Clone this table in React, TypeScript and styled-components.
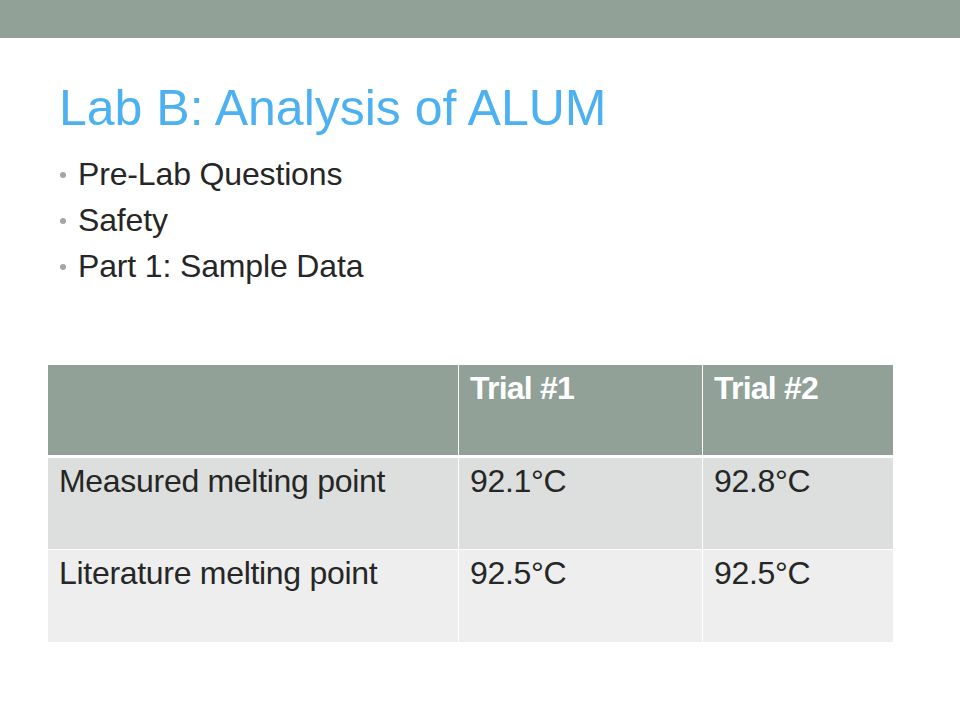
import React from "react";
import styled, { createGlobalStyle } from "styled-components";

const GlobalStyle = createGlobalStyle`
  html, body {
    margin: 0;
    padding: 0;
    background: #ffffff;
    font-family: "Liberation Sans", Arial, sans-serif;
  }
`;

const Slide = styled.div`
  width: 960px;
  height: 720px;
  background: #ffffff;
  display: flex;
  flex-direction: column;
  overflow: hidden;
`;

const TopBar = styled.div`
  height: 38px;
  background: #91a197;
  flex: none;
`;

const Title = styled.h1`
  margin: 40px 0 0 59px;
  font-size: 50px;
  line-height: 60px;
  font-weight: 400;
  color: #4db1f1;
  letter-spacing: 0;
`;

const BulletList = styled.ul`
  list-style: none;
  margin: 13px 0 0 0;
  padding: 0 0 0 60px;
`;

const Bullet = styled.li`
  display: flex;
  align-items: center;
  font-size: 32px;
  line-height: 46px;
  letter-spacing: -0.15px;
  color: #262626;
  &::before {
    content: "";
    width: 6px;
    height: 6px;
    border-radius: 50%;
    background: #a3a6a4;
    margin-right: 12px;
    margin-top: 2px;
    flex: none;
  }
`;

const Table = styled.div`
  margin: 76px 0 0 48px;
  width: 845px;
  display: flex;
  flex-direction: column;
`;

const Row = styled.div<{ $gapAfter: number; $height: number }>`
  display: grid;
  grid-template-columns: 410px 243px 190px;
  column-gap: 1px;
  height: ${(p) => p.$height}px;
  margin-bottom: ${(p) => p.$gapAfter}px;
`;

const Cell = styled.div<{ $bg: string; $head?: boolean }>`
  background: ${(p) => p.$bg};
  padding: 5px 11px 0 11px;
  font-size: 32px;
  line-height: 36px;
  font-weight: ${(p) => (p.$head ? 700 : 400)};
  color: ${(p) => (p.$head ? "#ffffff" : "#262626")};
  letter-spacing: ${(p) => (p.$head ? "-0.8px" : "-0.3px")};
  white-space: nowrap;
`;

const rows = [
  { label: "Measured melting point", a: "92.1°C", b: "92.8°C", bg: "#dcdfdd" },
  { label: "Literature melting point", a: "92.5°C", b: "92.5°C", bg: "#edeeed" },
];

export default function App() {
  return (
    <>
      <GlobalStyle />
      <Slide>
        <TopBar />
        <Title>Lab B: Analysis of ALUM</Title>
        <BulletList>
          <Bullet>Pre-Lab Questions</Bullet>
          <Bullet>Safety</Bullet>
          <Bullet>Part 1: Sample Data</Bullet>
        </BulletList>
        <Table>
          <Row $height={90} $gapAfter={3}>
            <Cell $bg="#91a197" $head />
            <Cell $bg="#91a197" $head>Trial #1</Cell>
            <Cell $bg="#91a197" $head>Trial #2</Cell>
          </Row>
          {rows.map((r, i) => (
            <Row key={r.label} $height={i === 0 ? 91 : 92} $gapAfter={i === 0 ? 1 : 0}>
              <Cell $bg={r.bg}>{r.label}</Cell>
              <Cell $bg={r.bg}>{r.a}</Cell>
              <Cell $bg={r.bg}>{r.b}</Cell>
            </Row>
          ))}
        </Table>
      </Slide>
    </>
  );
}
